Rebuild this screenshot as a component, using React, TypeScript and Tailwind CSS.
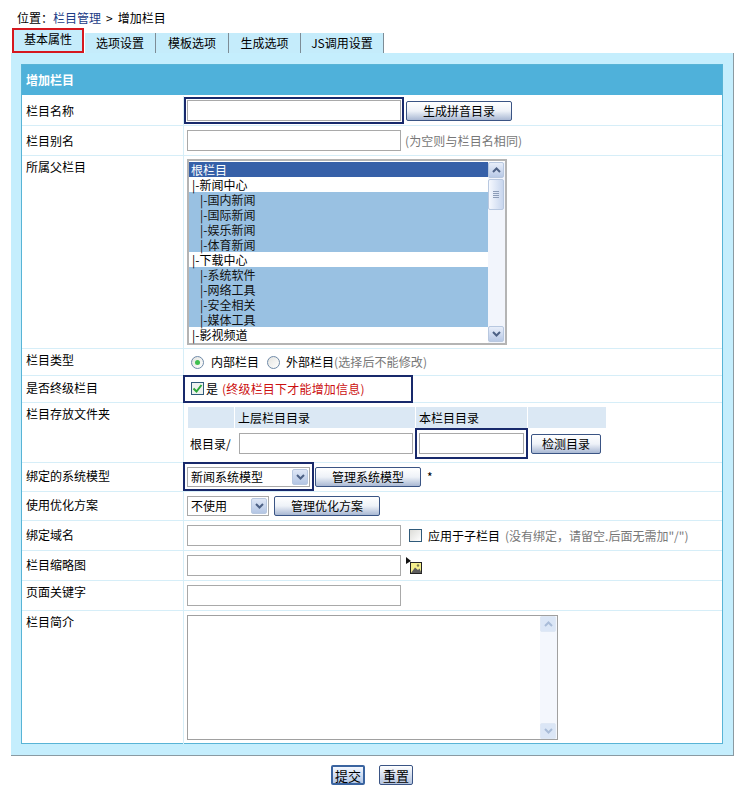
import React from "react";

const font = { fontFamily: '"Noto Sans CJK SC", "Liberation Sans", sans-serif' };

function Btn({ w, children }: { w: string; children: React.ReactNode }) {
  return (
    <div className={`${w} h-[20px] shrink-0 flex items-center justify-center rounded-[2px] border border-[#3a5484] bg-gradient-to-b from-[#ffffff] via-[#eef2f8] to-[#a9b8d3] text-[12px] text-black leading-none`}>
      {children}
    </div>
  );
}

function Chevron({ up, pale }: { up?: boolean; pale?: boolean }) {
  return (
    <svg width="9" height="6" viewBox="0 0 9 6">
      <path d={up ? "M1 5 L4.5 1.5 L8 5" : "M1 1 L4.5 4.5 L8 1"} fill="none" stroke={pale ? "#a9bcd8" : "#4d6185"} strokeWidth="2" />
    </svg>
  );
}

function ScrollBtn({ up, pale }: { up?: boolean; pale?: boolean }) {
  return (
    <div className={`w-[16px] h-[16px] shrink-0 flex items-center justify-center rounded-[2px] border ${pale ? "border-[#dfe8f5] bg-[#dbe6f6]" : "border-[#b8c8e0] bg-gradient-to-b from-[#e8eefa] to-[#b8c9e6]"}`}>
      <Chevron up={up} pale={pale} />
    </div>
  );
}

function Dropdown({ w, text }: { w: string; text: string }) {
  return (
    <div className={`${w} h-[20px] shrink-0 flex items-center justify-between border border-[#a9a9a9] pl-[3px] pr-[1px] bg-white text-[12px]`}>
      <span>{text}</span>
      <div className="w-[16px] h-[16px] flex items-center justify-center border border-[#b8c8e0] bg-gradient-to-b from-[#dfe7f6] to-[#b4c6e4] rounded-[2px]">
        <Chevron />
      </div>
    </div>
  );
}

function Input({ w = "w-[214px]", h = "h-[21px]" }: { w?: string; h?: string }) {
  return <div className={`${w} ${h} shrink-0 border border-[#a9a9a9] bg-white`} />;
}

function Row({ label, h, pt, children, center = true, last }: { label: string; h: string; pt: string; children: React.ReactNode; center?: boolean; last?: boolean }) {
  return (
    <div className={`${h} flex ${last ? "" : "border-b border-[#d6eef8]"}`}>
      <div className={`w-[162px] shrink-0 border-r border-[#d6eef8] pl-[4px] ${pt} text-[12px] leading-[18px]`}>{label}</div>
      <div className={`flex-1 min-w-0 pl-[3px] flex ${center ? "items-center" : ""}`}>{children}</div>
    </div>
  );
}

const items: [string, boolean][] = [
  ["根栏目", false],
  ["|-新闻中心", false],
  ["|-国内新闻", true],
  ["|-国际新闻", true],
  ["|-娱乐新闻", true],
  ["|-体育新闻", true],
  ["|-下载中心", false],
  ["|-系统软件", true],
  ["|-网络工具", true],
  ["|-安全相关", true],
  ["|-媒体工具", true],
  ["|-影视频道", false],
];

function ListBox() {
  return (
    <div className="w-[320px] h-[186px] border-2 border-[#b4b4b4] bg-white pt-[1px] flex">
      <div className="w-[299px]">
        {items.map(([t, blue], i) => (
          <div
            key={i}
            className={`h-[15px] text-[12px] leading-[15px] whitespace-nowrap ${i === 0 ? "bg-[#3660a8] text-white pl-[2px]" : blue ? "bg-[#99c1e2] text-[#111] pl-[11px]" : "bg-white text-black pl-[3px]"}`}
          >
            {t}
          </div>
        ))}
      </div>
      <div className="w-[17px] flex flex-col bg-[#f2f5fc]">
        <ScrollBtn up />
        <div className="w-[16px] h-[31px] mt-[1px] rounded-[2px] border border-[#b8c8e0] bg-gradient-to-r from-[#f5f8fe] to-[#c8d6ee] flex flex-col items-center justify-center gap-[1px]">
          <span className="w-[6px] h-px bg-[#8d9db8]" />
          <span className="w-[6px] h-px bg-[#8d9db8]" />
          <span className="w-[6px] h-px bg-[#8d9db8]" />
          <span className="w-[6px] h-px bg-[#8d9db8]" />
        </div>
        <div className="flex-1" />
        <ScrollBtn />
        <div className="h-[1px]" />
      </div>
    </div>
  );
}

function Radio({ on }: { on?: boolean }) {
  return (
    <span className="w-[13px] h-[13px] shrink-0 rounded-full border border-[#6f8aa8] bg-gradient-to-br from-[#e4e4e0] to-white flex items-center justify-center">
      {on && <span className="w-[5px] h-[5px] rounded-full bg-[#3fbf4f]" />}
    </span>
  );
}

function ImageIcon() {
  return (
    <svg width="17" height="18" viewBox="0 0 17 18" className="shrink-0">
      <path d="M0 0 L5 4 L0 7 Z" fill="#111" />
      <rect x="4.5" y="5.5" width="11" height="11" fill="#f4ee8c" stroke="#222" strokeWidth="1" />
      <circle cx="12" cy="8.5" r="1.2" fill="#7a7a50" />
      <path d="M5 16 L9 10.5 L12 13 L13.5 11.5 L15.5 16 Z" fill="#5d5d5d" />
    </svg>
  );
}

export default function App() {
  return (
    <div style={font} className="w-[744px] h-[801px] bg-white text-black overflow-hidden">
      <div className="h-[28px] pl-[17px] pt-[10px] text-[12px] leading-[16px]">
        位置：<span className="text-[#1c3c86]">栏目管理</span>
        <span className="mx-[5px]">&gt;</span>增加栏目
      </div>

      <div className="h-[25px] flex pl-[12px] text-[12px]">
        <div className="w-[72px] h-[25px] border-2 border-[#d5181f] bg-[#c5ecfb] flex items-center justify-center leading-none pb-[3px]">基本属性</div>
        <div className="ml-[1px] mt-[5px] w-[71px] h-[20px] bg-[#c5ecfb] border-r border-[#7d8c96] flex items-center justify-center leading-none pb-[1px]">选项设置</div>
        <div className="mt-[5px] w-[73px] h-[20px] bg-[#c5ecfb] border-r border-[#7d8c96] flex items-center justify-center leading-none pb-[1px]">模板选项</div>
        <div className="mt-[5px] w-[72px] h-[20px] bg-[#c5ecfb] border-r border-[#7d8c96] flex items-center justify-center leading-none pb-[1px]">生成选项</div>
        <div className="mt-[5px] w-[83px] h-[20px] bg-[#c5ecfb] border-r border-[#7d8c96] flex items-center justify-center leading-none pb-[1px]">JS调用设置</div>
      </div>

      <div className="ml-[11px] w-[723px] h-[703px] bg-[#c5eefd] border-r border-b border-[#8a9aa2] pl-[10px] pt-[11px]">
        <div className="w-[702px] h-[680px] border border-[#58b4d6] bg-white">
          <div className="h-[31px] bg-[#4fb1da] border-b border-white pl-[4px] flex items-center text-[12px] font-bold text-white">增加栏目</div>

          <Row label="栏目名称" h="h-[30px]" pt="pt-[6px]">
            <div className="border-2 border-[#18296b] p-px -ml-[3px] -mt-px">
              <Input />
            </div>
            <div className="ml-[2px]">
              <Btn w="w-[106px]">生成拼音目录</Btn>
            </div>
          </Row>

          <Row label="栏目别名" h="h-[30px]" pt="pt-[6px]">
            <Input />
            <span className="ml-[4px] text-[12px] text-[#777] tracking-[0.1px]">(为空则与栏目名相同)</span>
          </Row>

          <Row label="所属父栏目" h="h-[193px]" pt="pt-[2px]">
            <ListBox />
          </Row>

          <Row label="栏目类型" h="h-[27px]" pt="pt-[2px]">
            <div className="flex items-center text-[12px] pl-[4px]">
              <Radio on />
              <span className="ml-[7px]">内部栏目</span>
              <span className="ml-[8px]"><Radio /></span>
              <span className="ml-[6px]">外部栏目</span>
              <span className="text-[#777] tracking-[0.1px]">(选择后不能修改)</span>
            </div>
          </Row>

          <Row label="是否终级栏目" h="h-[27px]" pt="pt-[3px]">
            <div className="-ml-[4px] -mt-[1px] w-[230px] h-[28px] border-2 border-[#18296b] flex items-center pl-[6px] text-[12px]">
              <span className="w-[13px] h-[13px] border border-[#2f5a7a] bg-[#eef2ee] flex items-center justify-center">
                <svg width="11" height="11" viewBox="0 0 11 11"><path d="M1.5 5.5 L4.5 8.5 L9.5 2" fill="none" stroke="#2da83a" strokeWidth="2" /></svg>
              </span>
              <span className="ml-[2px]">是</span>
              <span className="ml-[4px] text-[#cc1010] tracking-[0.2px]">(终级栏目下才能增加信息)</span>
            </div>
          </Row>

          <Row label="栏目存放文件夹" h="h-[60px]" pt="pt-[2px]" center={false}>
            <div className="w-[419px] pl-[1px] pt-[4px]">
              <div className="flex h-[21px] bg-[#dbe8f4] text-[12px] leading-[21px]">
                <div className="w-[47px] border-r border-white" />
                <div className="w-[181px] border-r border-white pl-[3px]">上层栏目目录</div>
                <div className="w-[112px] border-r border-white pl-[3px]">本栏目目录</div>
                <div className="flex-1" />
              </div>
              <div className="flex items-center h-[31px] text-[12px]">
                <span className="w-[51px] pl-[2px] shrink-0">根目录/</span>
                <Input w="w-[174px]" />
                <div className="ml-[2px] border-2 border-[#18296b] w-[113px] h-[31px] flex items-center justify-center">
                  <Input w="w-[105px]" />
                </div>
                <div className="ml-[3px]">
                  <Btn w="w-[70px]">检测目录</Btn>
                </div>
              </div>
            </div>
          </Row>

          <Row label="绑定的系统模型" h="h-[29px]" pt="pt-[4px]">
            <div className="-ml-[4px] w-[131px] h-[29px] border-2 border-[#18296b] flex items-center pl-[2px] -mt-[1px]">
              <Dropdown w="w-[123px]" text="新闻系统模型" />
            </div>
            <div className="ml-[1px]">
              <Btn w="w-[106px]">管理系统模型</Btn>
            </div>
            <span className="ml-[6px] text-[12px]">*</span>
          </Row>

          <Row label="使用优化方案" h="h-[29px]" pt="pt-[4px]">
            <Dropdown w="w-[82px]" text="不使用" />
            <div className="ml-[5px]">
              <Btn w="w-[106px]">管理优化方案</Btn>
            </div>
          </Row>

          <Row label="绑定域名" h="h-[30px]" pt="pt-[5px]">
            <Input />
            <span className="ml-[8px] w-[13px] h-[13px] border border-[#2f5a7a] bg-gradient-to-br from-[#dcdcd8] to-white" />
            <span className="ml-[6px] text-[12px]">应用于子栏目</span>
            <span className="ml-[5px] text-[12px] text-[#777]">(没有绑定，请留空.后面无需加"/")</span>
          </Row>

          <Row label="栏目缩略图" h="h-[30px]" pt="pt-[5px]">
            <Input />
            <div className="ml-[5px]">
              <ImageIcon />
            </div>
          </Row>

          <Row label="页面关键字" h="h-[30px]" pt="pt-[2px]">
            <Input />
          </Row>

          <Row label="栏目简介" h="h-[133px]" pt="pt-[2px]" last>
            <div className="w-[371px] h-[125px] border border-[#a0a0a0] bg-white flex justify-end">
              <div className="w-[17px] flex flex-col bg-[#f4f7fd]">
                <ScrollBtn up pale />
                <div className="flex-1" />
                <ScrollBtn pale />
              </div>
            </div>
          </Row>
        </div>
      </div>

      <div className="flex pl-[331px] pt-[9px] gap-[14px]">
        <div className="w-[34px] h-[20px] flex items-center justify-center rounded-[2px] border-2 border-[#3a64a0] bg-gradient-to-b from-[#f4f8ff] to-[#b3c7e6] text-[13px] leading-none">提交</div>
        <div className="w-[34px] h-[20px] flex items-center justify-center rounded-[2px] border border-[#3a5484] bg-gradient-to-b from-white to-[#b3c3de] text-[13px] leading-none">重置</div>
      </div>
    </div>
  );
}
